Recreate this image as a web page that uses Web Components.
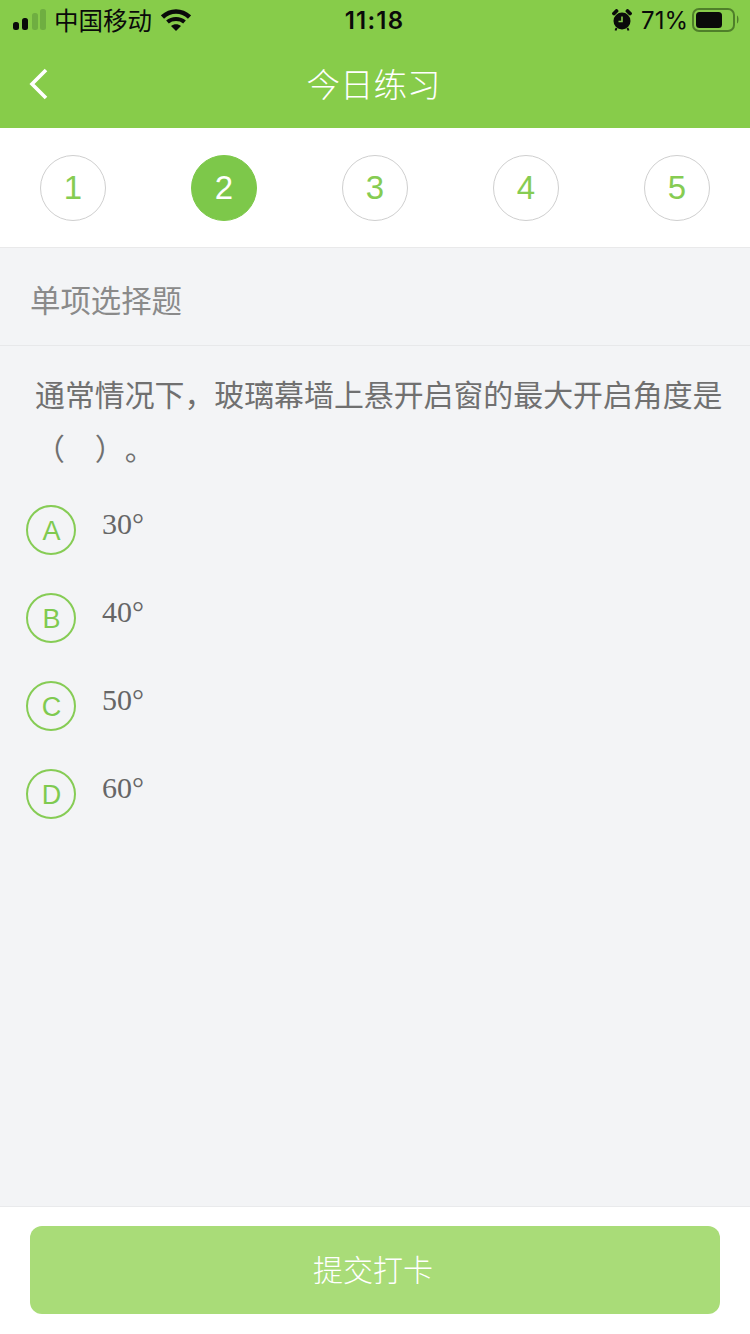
<!DOCTYPE html>
<html lang="zh-CN"><head><meta charset="utf-8">
<style>
html,body{margin:0;padding:0;height:100%}
body{font-family:"Noto Sans CJK SC","Liberation Sans",sans-serif;background:#f3f4f6;text-spacing-trim:space-all}
</style></head><body>
<quiz-page></quiz-page>
<script>
function def(name,css,html){
  customElements.define(name,class extends HTMLElement{
    connectedCallback(){
      if(this.shadowRoot)return;
      const r=this.attachShadow({mode:'open'});
      r.innerHTML='<style>'+css+'</style>'+(typeof html==='function'?html(this):html);
    }
  });
}
def('status-bar',`
:host{display:flex;align-items:center;height:40px;padding:0 11px 0 13px;color:#0a0a0a;font-size:24.5px;line-height:40px}
.left,.right{display:flex;align-items:center;flex:1}
.right{justify-content:flex-end}
.carrier{margin-left:7px;font-family:"Noto Sans CJK SC",sans-serif}
.wifi{margin-left:9px}
.time{font:600 24px/40px Inter,"Liberation Sans",sans-serif;flex:none;letter-spacing:1.200px;margin:2px 0 0 -3px}
.pct{font:400 24px/40px Inter,"Liberation Sans",sans-serif;margin:2px 4px 0 9px}
svg{display:block}
`,`<div class="left">
<svg width="34" height="22" viewBox="0 0 34 22" style="margin-top:-1px"><rect x="0" y="13" width="6" height="8" rx="2.500" fill="#0a0a0a"/><rect x="9" y="9" width="6" height="12" rx="2.500" fill="#0a0a0a"/><rect x="19" y="4" width="6" height="17" rx="2.500" fill="#6fae41"/><rect x="27" y="0" width="6" height="21" rx="2.500" fill="#6fae41"/></svg>
<span class="carrier">中国移动</span>
<svg class="wifi" width="30" height="22" viewBox="0 0 30 22"><path d="M1.500 8C9.500 .5 20.500 .5 28.500 8" fill="none" stroke="#0a0a0a" stroke-width="4.500"/><path d="M6.500 13C11 9 19 9 23.500 13" fill="none" stroke="#0a0a0a" stroke-width="4"/><path d="M10 17C13 14.500 17 14.500 20 17L15 22Z" fill="#0a0a0a"/></svg>
</div>
<span class="time">11:18</span>
<div class="right">
<svg width="20" height="22" viewBox="0 0 20 22"><circle cx="10" cy="12" r="8.500" fill="#0a0a0a"/><path d="M10 7.500v5H6.500" fill="none" stroke="#87cc4a" stroke-width="1.600"/><path d="M2 4.500 4.500 2" stroke="#0a0a0a" stroke-width="3.800" stroke-linecap="round"/><path d="M18 4.500 15.500 2" stroke="#0a0a0a" stroke-width="3.800" stroke-linecap="round"/><path d="M4.500 19 3.500 21.500M15.500 19l1 2.500" stroke="#0a0a0a" stroke-width="2"/></svg>
<span class="pct">71%</span>
<svg width="47" height="24" viewBox="0 0 47 24"><rect x="1" y="1" width="41" height="22" rx="6" fill="none" stroke="#4f7f2a" stroke-width="2"/><rect x="4" y="4" width="26" height="16" rx="3.500" fill="#0a0a0a"/><path d="M45 7.500c2 1 2 7 0 8z" fill="#4f7f2a"/></svg>
</div>`);
def('nav-bar',`
:host{display:flex;align-items:center;justify-content:center;height:88px;position:relative;color:#fff}
.back{position:absolute;left:29px;top:28px}
.title{font-size:33.500px;font-weight:300;line-height:88px;margin:-2px 3px 0 0}
`,`<svg class="back" width="20" height="32" viewBox="0 0 20 32"><path d="M17 2 3 16l14 14" fill="none" stroke="#fff" stroke-width="3.600"/></svg><span class="title"><slot></slot></span>`);
def('app-header',`:host{display:block;background:#87cc4a;height:128px}`,`<slot></slot>`);
def('step-item',`
:host{display:flex;align-items:center;justify-content:center;box-sizing:border-box;width:66px;height:66px;border-radius:50%;border:1px solid #cfcfcf;color:#86cc52;font:33px "Liberation Sans",sans-serif;background:#fff}
:host([active]){background:#7dc84a;border-color:#7dc84a;color:#fff}
`,`<slot></slot>`);
def('step-row',`
:host{display:flex;justify-content:space-between;padding:27px 40px 26px;background:#fff;border-bottom:1px solid #e9e9ea}
`,`<slot></slot>`);
def('section-title',`
:host{display:block;height:97px;line-height:103px;padding-left:30px;font-size:30.400px;font-weight:400;color:#8a8a8a;border-bottom:1px solid #e7e8ea}
`,`<slot></slot>`);
def('question-text',`
:host{display:block;padding:20px 20px 0 35px;font-size:29.900px;line-height:54px;font-weight:400;color:#707070}
`,`<slot></slot>`);
def('option-item',`
:host{display:flex;align-items:flex-start;height:88px;padding-left:26px;box-sizing:border-box}
.c{box-sizing:border-box;width:50px;height:50px;border-radius:50%;border:2px solid #86cc55;color:#7fca50;display:flex;align-items:center;justify-content:center;font:27px "Liberation Sans",sans-serif;padding:2px 0 0 1px}
.t{margin:-1px 0 0 26px;font:30px/40px "Liberation Serif",serif;color:#666}
`,t=>`<span class="c">${t.getAttribute('letter')}</span><span class="t"><slot></slot></span>`);
def('option-list',`:host{display:block;padding-top:31px}`,`<slot></slot>`);
def('submit-bar',`
:host{display:block;background:#fff;border-top:1px solid #e9eaec;padding:19px 30px 20px}
.b{box-sizing:border-box;height:88px;border-radius:12px;background:#a9dc78;color:#fff;font-size:30px;font-weight:300;display:flex;align-items:center;justify-content:center;padding:0 4px 4px 0}
`,`<div class="b"><slot></slot></div>`);
def('quiz-page',`
:host{display:flex;flex-direction:column;height:1334px;background:#f3f4f6}
main{flex:1}
`,`<app-header><status-bar></status-bar><nav-bar>今日练习</nav-bar></app-header>
<step-row><step-item>1</step-item><step-item active>2</step-item><step-item>3</step-item><step-item>4</step-item><step-item>5</step-item></step-row>
<main><section-title>单项选择题</section-title>
<question-text>通常情况下，玻璃幕墙上悬开启窗的最大开启角度是（　）。</question-text>
<option-list><option-item letter="A">30°</option-item><option-item letter="B">40°</option-item><option-item letter="C">50°</option-item><option-item letter="D">60°</option-item></option-list></main>
<submit-bar>提交打卡</submit-bar>`);
</script>
</body></html>
